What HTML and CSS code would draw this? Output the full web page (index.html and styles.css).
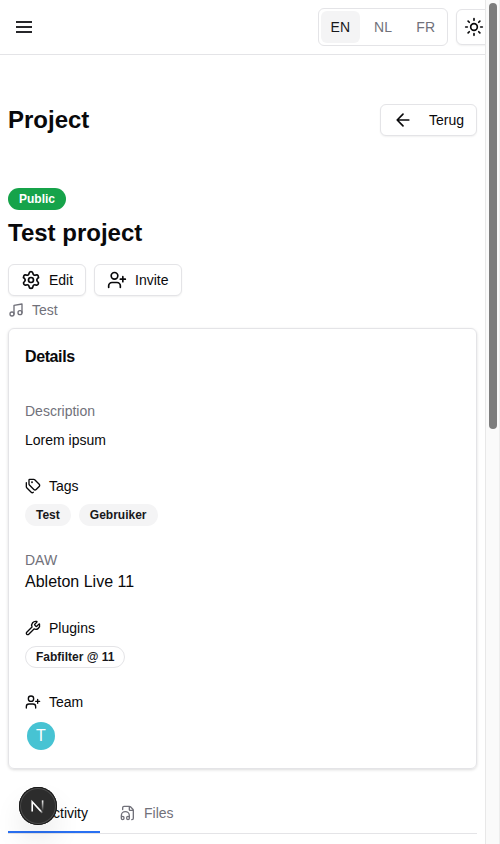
FILE: index.html
```html
<!DOCTYPE html>
<html lang="nl">
<head>
<meta charset="utf-8">
<title>Project</title>
<link rel="stylesheet" href="styles.css">
</head>
<body>
<div class="viewport">
  <div class="page">
    <header class="header">
      <svg class="icon menu" viewBox="0 0 16 12"><path d="M0 1h16M0 6h16M0 11h16"/></svg>
      <div class="header-actions">
        <div class="langs"><span class="lang active">EN</span><span class="lang">NL</span><span class="lang">FR</span></div>
        <button class="btn theme"><svg class="icon i20" viewBox="0 0 24 24"><circle cx="12" cy="12" r="4"/><path d="M12 2v2M12 20v2M4.93 4.93l1.41 1.41M17.66 17.66l1.41 1.41M2 12h2M20 12h2M6.34 17.66l-1.41 1.41M19.07 4.93l-1.41 1.41"/></svg></button>
      </div>
    </header>
    <main class="main">
      <div class="title-row">
        <h1>Project</h1>
        <button class="btn back"><svg class="icon i20" viewBox="0 0 24 24"><path d="m12 19-7-7 7-7M19 12H5"/></svg>Terug</button>
      </div>
      <span class="badge public">Public</span>
      <h2>Test project</h2>
      <div class="actions">
        <button class="btn edit"><svg class="icon i20" viewBox="0 0 24 24"><path d="M9.671 4.136a2.34 2.34 0 0 1 4.659 0 2.34 2.34 0 0 0 3.319 1.915 2.34 2.34 0 0 1 2.33 4.033 2.34 2.34 0 0 0 0 3.831 2.34 2.34 0 0 1-2.33 4.033 2.34 2.34 0 0 0-3.319 1.915 2.34 2.34 0 0 1-4.659 0 2.34 2.34 0 0 0-3.32-1.915 2.34 2.34 0 0 1-2.33-4.033 2.34 2.34 0 0 0 0-3.831A2.34 2.34 0 0 1 6.35 6.051a2.34 2.34 0 0 0 3.319-1.915"/><circle cx="12" cy="12" r="3"/></svg>Edit</button>
        <button class="btn invite"><svg class="icon i20" viewBox="0 0 24 24"><path d="M16 21v-2a4 4 0 0 0-4-4H6a4 4 0 0 0-4 4v2M19 8v6M22 11h-6"/><circle cx="9" cy="7" r="4"/></svg>Invite</button>
      </div>
      <div class="label genre"><svg class="icon i16" viewBox="0 0 24 24"><path d="M9 18V5l12-2v13"/><circle cx="6" cy="18" r="3"/><circle cx="18" cy="16" r="3"/></svg>Test</div>
      <section class="card">
        <h3>Details</h3>
        <div class="muted">Description</div>
        <p class="description">Lorem ipsum</p>
        <div class="label"><svg class="icon i16" viewBox="0 0 24 24"><path d="M13.172 2a2 2 0 0 1 1.414.586l6.71 6.71a2.4 2.4 0 0 1 0 3.408l-4.592 4.592a2.4 2.4 0 0 1-3.408 0l-6.71-6.71A2 2 0 0 1 6 9.172V3a1 1 0 0 1 1-1zM2 7v6.172a2 2 0 0 0 .586 1.414l6.71 6.71a2.4 2.4 0 0 0 3.191.193"/><circle cx="10.5" cy="6.5" r=".5" fill="currentColor"/></svg>Tags</div>
        <div class="badges"><span class="badge">Test</span><span class="badge">Gebruiker</span></div>
        <div class="muted">DAW</div>
        <p class="daw-name">Ableton Live 11</p>
        <div class="label"><svg class="icon i16" viewBox="0 0 24 24"><path d="M14.7 6.3a1 1 0 0 0 0 1.4l1.6 1.6a1 1 0 0 0 1.4 0l3.106-3.105c.32-.322.863-.22.983.218a6 6 0 0 1-8.259 7.057l-7.91 7.91a1 1 0 0 1-2.999-3l7.91-7.91a6 6 0 0 1 7.057-8.259c.438.12.54.662.219.984z"/></svg>Plugins</div>
        <div class="badges"><span class="badge outline">Fabfilter @ 11</span></div>
        <div class="label"><svg class="icon i16" viewBox="0 0 24 24"><path d="M16 21v-2a4 4 0 0 0-4-4H6a4 4 0 0 0-4 4v2M19 8v6M22 11h-6"/><circle cx="9" cy="7" r="4"/></svg>Team</div>
        <div class="avatar">T</div>
      </section>
      <nav class="tabs">
        <div class="tab current">Activity</div>
        <div class="tab"><svg class="icon i16" viewBox="0 0 24 24"><path d="M4 6.835V4a2 2 0 0 1 2-2h8a2.4 2.4 0 0 1 1.706.706l3.588 3.588A2.4 2.4 0 0 1 20 8v12a2 2 0 0 1-2 2h-.343M14 2v5a1 1 0 0 0 1 1h5M2 19a2 2 0 0 1 4 0v1a2 2 0 0 1-4 0v-4a6 6 0 0 1 12 0v4a2 2 0 0 1-4 0v-1a2 2 0 0 1 4 0"/></svg>Files</div>
      </nav>
    </main>
  </div>
  <div class="scrollbar"><div class="thumb"></div></div>
  <div class="dev-badge"><svg viewBox="0 0 38 38" width="38" height="38" fill="none"><defs><linearGradient id="diag" x1="18" y1="18" x2="24.5" y2="26" gradientUnits="userSpaceOnUse"><stop stop-color="#fff"/><stop offset=".6" stop-color="#fff"/><stop offset="1" stop-color="#fff" stop-opacity="0"/></linearGradient><linearGradient id="stem" x1="23" y1="13" x2="23" y2="24" gradientUnits="userSpaceOnUse"><stop stop-color="#fff"/><stop offset="1" stop-color="#fff" stop-opacity="0"/></linearGradient></defs><path d="M13.2 24.5V14.7L23.4 25.9" stroke="url(#diag)" stroke-width="1.6"/><path d="M23.6 13.4v11" stroke="url(#stem)" stroke-width="1.6"/></svg></div>
</div>
</body>
</html>
```
FILE: styles.css
```css
* { box-sizing: border-box; }
body { margin: 0; background: #fff; color: #09090b; font: 14px/20px "Liberation Sans", Arial, sans-serif; }
h1, h2, h3, p { margin: 0; }
.viewport { position: relative; display: flex; width: 500px; height: 844px; overflow: hidden; }
.page { width: 485px; flex: none; overflow: hidden; }
.icon { fill: none; stroke: currentColor; stroke-width: 2; stroke-linecap: round; stroke-linejoin: round; flex: none; }
.i20 { width: 20px; height: 20px; }
.i16 { width: 16px; height: 16px; }
.menu { width: 16px; height: 12px; stroke: #27272a; stroke-linecap: butt; }
.header { height: 55px; border-bottom: 1px solid #e4e4e7; display: flex; align-items: center; justify-content: space-between; padding-left: 16px; }
.header-actions { display: flex; align-items: center; gap: 8px; margin-right: -7px; }
.langs { display: flex; align-items: center; height: 38px; width: 130px; padding: 2px; gap: 4px; border: 1px solid #e4e4e7; border-radius: 6px; }
.lang { display: flex; align-items: center; justify-content: center; width: 39px; height: 32px; color: #71717a; border-radius: 6px; }
.lang.active { background: #f4f4f5; color: #18181b; }
.btn { display: flex; align-items: center; height: 32px; padding: 0 12px; border: 1px solid #e4e4e7; border-radius: 6px; background: #fff; box-shadow: 0 1px 2px rgba(0,0,0,.06); font: inherit; color: inherit; }
.theme { width: 36px; height: 36px; padding: 0; justify-content: center; }
.main { padding: 49px 8px 0; }
.title-row { display: flex; justify-content: space-between; align-items: center; margin-bottom: 52px; }
h1, h2 { font-size: 24px; line-height: 32px; font-weight: 700; }
.back { width: 97px; gap: 16px; }
.edit { width: 78px; gap: 8px; }
.invite { width: 88px; gap: 8px; }
.badge { display: inline-flex; align-items: center; height: 22px; padding: 0 11px; border-radius: 11px; background: #f4f4f5; color: #18181b; font-size: 12px; line-height: 16px; font-weight: 700; }
.badge.public { display: flex; width: fit-content; background: #16a34a; color: #fff; }
.badge.outline { background: #fff; border: 1px solid #e4e4e7; padding: 0 10px; }
h2 { margin: 7px 0 15px; }
.actions { display: flex; gap: 8px; margin-bottom: 4px; }
.label { display: flex; align-items: center; gap: 8px; }
.genre, .muted { color: #71717a; }
.card { width: 469px; height: 441px; margin-top: 8px; padding: 16px; border: 1px solid #e4e4e7; border-radius: 6px; box-shadow: 0 1px 3px rgba(0,0,0,.14); }
h3 { font-size: 16px; line-height: 24px; letter-spacing: -0.4px; margin-bottom: 32px; }
.description { margin: 9px 0 26px; }
.badges { display: flex; gap: 8px; margin: 8px 0 24px; }
.daw-name { font-size: 16px; line-height: 24px; margin-bottom: 24px; }
.avatar { width: 28px; height: 28px; margin: 10px 2px; border-radius: 50%; background: #47c3d3; color: #fff; display: flex; align-items: center; justify-content: center; font-size: 16px; line-height: 24px; }
.tabs { display: flex; gap: 8px; width: 469px; height: 40px; margin-top: 25px; border-bottom: 1px solid #e4e4e7; }
.tab { display: flex; align-items: center; height: 39px; padding: 1px 12px 0; gap: 8px; color: #71717a; border-bottom: 2px solid transparent; }
.tab.current { width: 92px; justify-content: flex-end; color: #09090b; border-bottom-color: #2970f2; }
.scrollbar { width: 15px; padding: 3px 2px 0 3px; background: #fafafa; border-left: 1px solid #e8e8e8; border-right: 1px solid #ededed; }
.thumb { width: 8px; height: 426px; border-radius: 4px; background: #7d7d7d; }
.dev-badge { position: absolute; left: 19px; top: 787px; width: 38px; height: 38px; border-radius: 50%; background: #2c2c2c; box-shadow: inset 0 0 0 1px #171717, inset 0 0 0 2px #4b4b4b, 0 16px 32px -8px rgba(0,0,0,.24); }
.dev-badge svg { display: block; }
```
